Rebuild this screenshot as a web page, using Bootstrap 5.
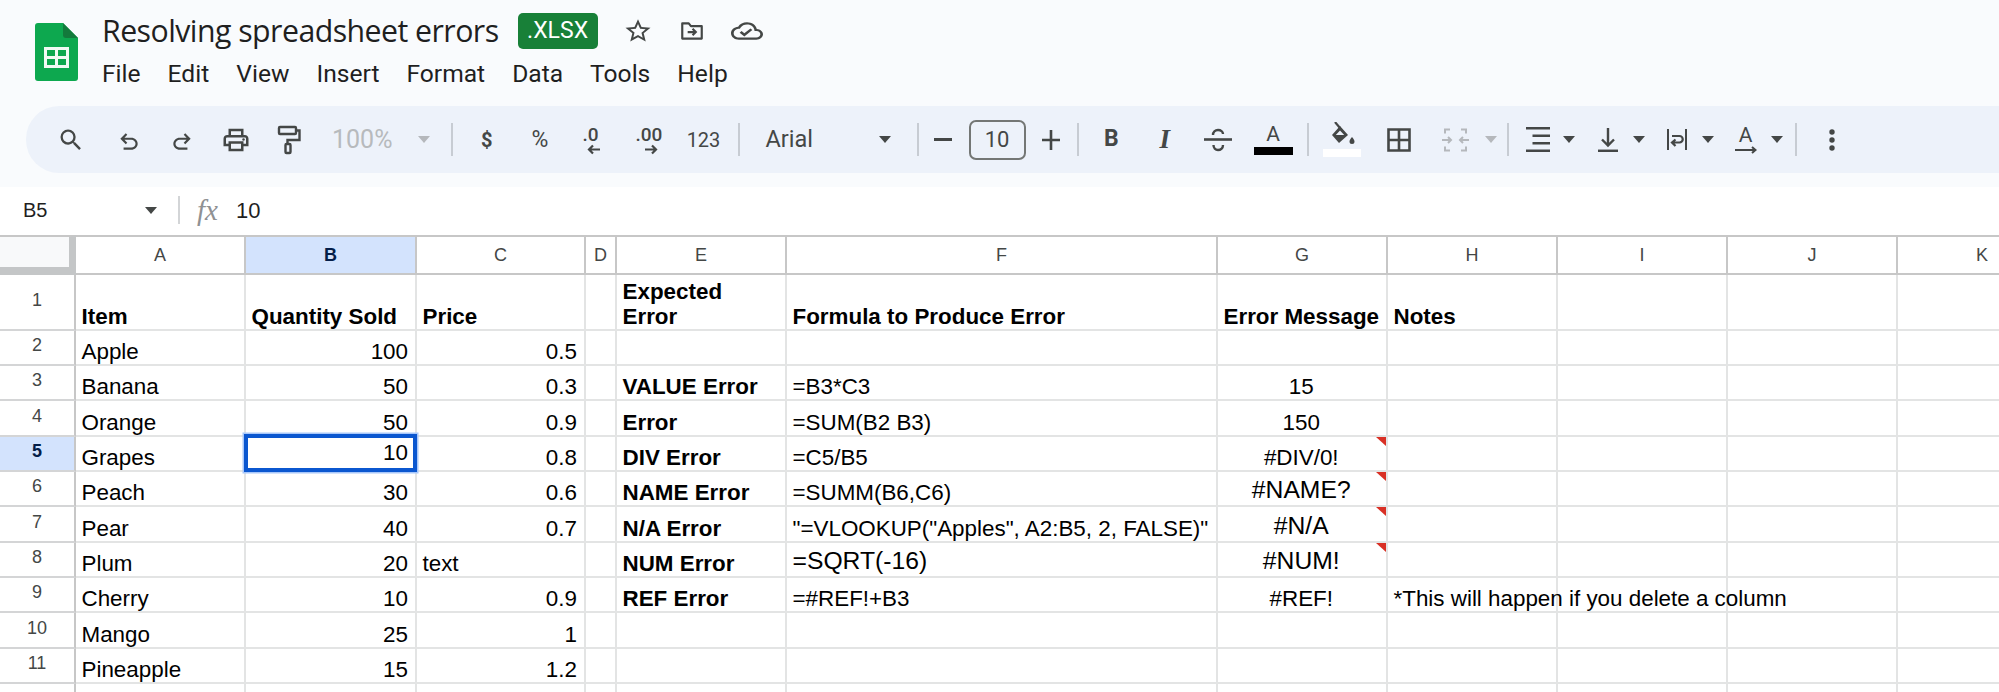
<!DOCTYPE html>
<html lang="en">
<head>
<meta charset="utf-8">
<title>Resolving spreadsheet errors</title>
<link href="https://cdn.jsdelivr.net/npm/bootstrap@5.3.0/dist/css/bootstrap.min.css" rel="stylesheet">
<style>
html,body{height:692px;overflow:hidden;background:#fff;}
body{font-family:Roboto,"Liberation Sans",sans-serif;color:#1f1f1f;}
.top-wrap{background:#f9fbfd;height:187px;}
.head-area{height:106px;padding-left:35px;}
.logo-box{width:43px;margin-top:23px;flex:none;}
.head-text{margin-left:24px;padding-top:13px;}
.doc-title{font-size:30.3px;line-height:36px;color:#1f1f1f;font-family:"Open Sans",Roboto,sans-serif;letter-spacing:-.55px;}
.xlsx-tag{background:#188038;color:#fff;width:80px;height:36px;border-radius:5px;font-size:23px;line-height:36px;text-align:center;margin-left:19px;}
.tico{color:#444746;}
.star-ico{margin-left:25px;}
.move-ico{margin-left:25px;}
.cloud-ico{margin-left:25px;}
.menu-row{margin-top:7px;height:36px;font-size:24.6px;line-height:36px;gap:27px;color:#1f1f1f;}
.tool-strip{margin-left:26px;height:67px;background:#edf2fa;border-radius:33px 0 0 33px;padding-left:20px;color:#444746;}
.tb{width:53.5px;height:67px;flex:none;}
.tw44{width:44px}.tw18{width:18px}.tw37{width:37px}.tw40{width:40px}.tw56{width:56px}.tw61{width:61px}.tw52{width:52px}.tw50{width:50px}.tw53{width:53px}
.sp4{margin-left:4px;}.sp6{margin-left:6px;}.sp7{margin-left:7px;}.sp8{margin-left:8px;}
.sepbox{width:14px;height:67px;flex:none;}
.sepbox.wide{width:17px;}
.sepbox.mid{width:16px;}
.sepbox.late{width:20px;}
.sepbox i{display:block;width:2px;height:33px;background:#c7ccd3;}
.tcaret{width:0;height:0;border-left:6.5px solid transparent;border-right:6.5px solid transparent;border-top:7px solid #444746;}
.tcaret.off{border-top-color:#b5b8bc;}
.zoom-box{width:127px;height:67px;flex:none;color:#b7babd;font-size:25px;padding-left:16px;padding-right:13px;}
.font-box{width:165px;height:67px;flex:none;font-size:23.5px;padding-left:20px;padding-right:20px;}
.size-box{width:57px;height:40px;border:2px solid #747775;border-radius:7px;font-size:22px;margin:0 5px 0 7px;flex:none;color:#444746;}
.glyph-t{font-size:20px;line-height:1;}
.glyph-p{font-size:23px;line-height:1;}
.glyph-b{font-size:23px;font-weight:700;}
.glyph-i{font-family:"Liberation Serif",serif;font-style:italic;font-weight:700;font-size:27px;line-height:1;}
.dec-stack{line-height:1;font-size:19px;font-weight:500;}
.arrow-l{margin-left:20px;}
.arrow-r{margin-left:14px;}
.color-a{font-size:21px;line-height:21px;}
.color-bar{width:39px;height:8px;background:#000;margin-top:2px;}
.white-bar{width:38px;height:8px;background:#fff;margin-top:3px;}
.formula-row{height:48px;padding-bottom:2px;background:#fff;color:#1f1f1f;font-family:"Liberation Sans",Arial,sans-serif;}
.cell-name{width:178px;padding-left:23px;padding-right:21px;font-size:20px;flex:none;}
.form-sep{width:2px;height:28px;background:#d3d5d7;flex:none;}
.fx-mark{font-family:"Liberation Serif",serif;font-style:italic;font-size:29px;line-height:1;color:#8f9193;margin-left:17px;width:39px;}
.form-val{font-size:22px;}
.sheet-grid{border-collapse:separate;border-spacing:0;table-layout:fixed;width:2068px;font-family:"Liberation Sans",Arial,sans-serif;font-size:22.4px;color:#000;}
.sheet-grid td,.sheet-grid th{padding:0 7px 0 5.500px;border-right:2px solid #e3e4e4;border-bottom:2px solid #e3e4e4;vertical-align:bottom;line-height:25px;white-space:nowrap;overflow:visible;font-weight:400;}
.sheet-grid .colh th{height:40px;padding:0;text-align:center;vertical-align:middle;font-size:18px;color:#444746;border-top:2px solid #c7c7c7;border-right:2px solid #c7c7c7;border-bottom:2px solid #c7c7c7;}
.sheet-grid .colh th.corner{background:#f8f9fa;border-right:7px solid #c4c6c7;border-bottom:8px solid #c4c6c7;height:40px;}
.sheet-grid .colh th.picked,.sheet-grid .rowh.picked{background:#d3e3fd;color:#041e49;font-weight:700;}
.sheet-grid .rowh{padding:0 0 4px;text-align:center;vertical-align:middle;font-size:18px;color:#444746;border-right:2px solid #c7c7c7;border-bottom:2px solid #d4d5d6;}
.r1{height:56px}.r35{height:35px}.r36{height:36px}
.sheet-grid .bb{font-weight:700;}
.sheet-grid .rr{text-align:right;}
.sheet-grid .cc{text-align:center;}
.sheet-grid .big{font-size:24.7px;padding-bottom:3px;}
.note-cell{position:relative;}
.note-cell::after{content:"";position:absolute;top:0;right:0;border-top:9px solid #d93025;border-left:10px solid transparent;}
.sel-cell{position:relative;}
.sheet-grid .sel-cell{padding-bottom:5px;}
.sel-cell::after{content:"";position:absolute;top:-3px;left:-2px;right:-2px;bottom:-2px;border:4px solid #0b57d0;box-shadow:0 0 0 1.500px #a8c7fa;}
.sheet-wrap{overflow:hidden;height:457px;}
</style>
</head>
<body>
<div class="top-wrap">
  <div class="head-area d-flex">
    <div class="logo-box">
      <svg width="43" height="58" viewBox="0 0 43 58"><path d="M3 0h25l15 15v40a3 3 0 0 1-3 3H3a3 3 0 0 1-3-3V3a3 3 0 0 1 3-3z" fill="#0da84f"/><path d="M28 0v12a3 3 0 0 0 3 3h12z" fill="#137a3c"/><path d="M9 24h25v21H9z M12 27v6h8v-6z M23 27v6h8v-6z M12 36v6h8v-6z M23 36v6h8v-6z" fill="#f1faf4" fill-rule="evenodd"/></svg>
    </div>
    <div class="head-text">
      <div class="d-flex align-items-center">
        <span class="doc-title">Resolving spreadsheet errors</span>
        <span class="xlsx-tag">.XLSX</span>
        <svg class="tico star-ico" width="30" height="28" viewBox="0 0 24 24" preserveAspectRatio="none" fill="currentColor"><path d="M22 9.24l-7.19-.62L12 2 9.19 8.63 2 9.24l5.46 4.73L5.82 21 12 17.27 18.18 21l-1.63-7.03L22 9.24zM12 15.4l-3.76 2.27 1-4.28-3.32-2.88 4.38-.38L12 6.1l1.71 4.04 4.38.38-3.32 2.88 1 4.28L12 15.4z"/></svg>
        <svg class="tico move-ico" width="28" height="26" viewBox="0 0 24 24" fill="none" stroke="currentColor" stroke-width="2"><path d="M3 19V5h6l2 2.5h10V19z" stroke-linejoin="round"/><path d="M8 13h7M12.5 10l3 3-3 3" /></svg>
        <svg class="tico cloud-ico" width="32" height="26" viewBox="0 0 24 24" preserveAspectRatio="none" fill="currentColor"><path d="M19.35 10.04C18.67 6.59 15.64 4 12 4 9.11 4 6.6 5.64 5.35 8.04 2.34 8.36 0 10.91 0 14c0 3.31 2.69 6 6 6h13c2.76 0 5-2.24 5-5 0-2.64-2.05-4.78-4.65-4.96zM19 18H6c-2.21 0-4-1.79-4-4 0-2.05 1.53-3.76 3.56-3.97l1.07-.11.5-.95C8.08 7.14 9.94 6 12 6c2.62 0 4.88 1.86 5.39 4.43l.3 1.5 1.53.11c1.56.1 2.78 1.41 2.78 2.96 0 1.65-1.35 3-3 3zm-9-3.82l-2.09-2.09L6.5 13.5 10 17l6.01-6.01-1.41-1.41z"/></svg>
      </div>
      <div class="menu-row d-flex"><span>File</span><span>Edit</span><span>View</span><span>Insert</span><span>Format</span><span>Data</span><span>Tools</span><span>Help</span></div>
    </div>
  </div>

  <div class="tool-strip d-flex align-items-center">
    <div class="tb tw50 d-flex align-items-center justify-content-center"><svg width="28" height="28" viewBox="0 0 24 24" fill="currentColor"><path d="M15.5 14h-.79l-.28-.27A6.471 6.471 0 0 0 16 9.5 6.5 6.5 0 1 0 9.5 16c1.61 0 3.09-.59 4.23-1.57l.27.28v.79l5 4.99L20.49 19l-4.99-5zm-6 0C7.01 14 5 11.99 5 9.5S7.01 5 9.5 5 14 7.01 14 9.5 11.99 14 9.5 14z"/></svg></div>
    <div class="tb sp6 d-flex align-items-center justify-content-center"><svg width="26" height="26" viewBox="0 0 24 24" fill="currentColor"><path d="M7 21v-2h7.1c1.05 0 1.96-.33 2.74-1S18 16.48 18 15.45s-.39-1.92-1.16-2.6-1.69-1-2.74-1H7.8l2.6 2.6L9 15.85l-5-5 5-5 1.4 1.4-2.6 2.6h6.3c1.62 0 3 .53 4.16 1.58S20 13.88 20 15.45s-.58 2.87-1.74 3.92S15.72 21 14.1 21H7z"/></svg></div>
    <div class="tb d-flex align-items-center justify-content-center"><svg width="26" height="26" viewBox="0 0 24 24" fill="currentColor"><path transform="matrix(-1 0 0 1 24 0)" d="M7 21v-2h7.1c1.05 0 1.96-.33 2.74-1S18 16.48 18 15.45s-.39-1.92-1.16-2.6-1.69-1-2.74-1H7.8l2.6 2.6L9 15.85l-5-5 5-5 1.4 1.4-2.6 2.6h6.3c1.62 0 3 .53 4.16 1.58S20 13.88 20 15.45s-.58 2.87-1.74 3.92S15.72 21 14.1 21H7z"/></svg></div>
    <div class="tb d-flex align-items-center justify-content-center"><svg width="30" height="30" viewBox="0 0 24 24" fill="currentColor"><path d="M19 8h-1V3H6v5H5c-1.66 0-3 1.34-3 3v6h4v4h12v-4h4v-6c0-1.66-1.34-3-3-3zM8 5h8v3H8V5zm8 14H8v-4h8v4zm2-4v-2H6v2H4v-4c0-.55.45-1 1-1h14c.55 0 1 .45 1 1v4h-2z"/><circle cx="18" cy="11.5" r="1"/></svg></div>
    <div class="tb d-flex align-items-center justify-content-center"><svg width="24" height="30" viewBox="0 0 24 30" fill="none" stroke="currentColor" stroke-width="2.4"><rect x="2" y="2" width="17" height="7" rx="1"/><path d="M19 5.5h3.5V15H10.5v3"/><rect x="8.5" y="19" width="5" height="9" rx="1"/></svg></div>
    <div class="zoom-box d-flex align-items-center justify-content-between"><span>100%</span><span class="tcaret off"></span></div>
    <div class="sepbox wide d-flex align-items-center justify-content-center"><i></i></div>
    <div class="tb d-flex align-items-center justify-content-center glyph-t"><b>$</b></div>
    <div class="tb tw53 d-flex align-items-center justify-content-center glyph-p">%</div>
    <div class="tb tw53 d-flex flex-column align-items-start justify-content-center dec-stack sp-dec"><span class="ms-3">.0</span><svg class="arrow-l" width="14" height="11" viewBox="0 0 14 11" fill="none" stroke="currentColor" stroke-width="2.2"><path d="M13 5.5H2M6 1.5l-4 4 4 4"/></svg></div>
    <div class="tb tw56 d-flex flex-column align-items-start justify-content-center dec-stack"><span class="ms-3">.00</span><svg class="arrow-r ms-4" width="14" height="11" viewBox="0 0 14 11" fill="none" stroke="currentColor" stroke-width="2.2"><path d="M1 5.5h11M8 1.5l4 4-4 4"/></svg></div>
    <div class="tb tw56 d-flex align-items-center justify-content-center glyph-t" >123</div>
    <div class="sepbox d-flex align-items-center justify-content-center"><i></i></div>
    <div class="font-box d-flex align-items-center justify-content-between"><span>Arial</span><span class="tcaret"></span></div>
    <div class="sepbox d-flex align-items-center justify-content-center"><i></i></div>
    <div class="tb tw37 d-flex align-items-center justify-content-center"><svg width="18" height="3" viewBox="0 0 18 3" fill="currentColor"><rect width="18" height="3"/></svg></div>
    <div class="size-box d-flex align-items-center justify-content-center">10</div>
    <div class="tb tw40 d-flex align-items-center justify-content-center"><svg width="18" height="20" viewBox="0 0 18 20" fill="currentColor"><path d="M0 8.7h18v2.6H0zM7.7 0h2.6v20H7.7z"/></svg></div>
    <div class="sepbox d-flex align-items-center justify-content-center"><i></i></div>
    <div class="tb d-flex align-items-center justify-content-center glyph-b">B</div>
    <div class="tb d-flex align-items-center justify-content-center glyph-i">I</div>
    <div class="tb d-flex align-items-center justify-content-center"><svg width="28" height="24" viewBox="0 0 28 24" fill="none" stroke="currentColor" stroke-width="2.4"><path d="M0 11.5h28" stroke-width="2.6"/><path d="M9 7c0-3 2.2-5 5-5s5 1.600 5 4"/><path d="M9.500 17c0 3 2 5 4.500 5s5-1.600 5-5"/></svg></div>
    <div class="tb tw56 d-flex flex-column align-items-center justify-content-center"><span class="color-a">A</span><span class="color-bar"></span></div>
    <div class="sepbox d-flex align-items-center justify-content-center"><i></i></div>
    <div class="tb d-flex flex-column align-items-center justify-content-center"><svg width="26" height="24" viewBox="0 0 26 24" fill="currentColor"><path d="M3 13l8-9 8 9-9 8z M6.800 13h8.400L11 8.500z" fill-rule="evenodd"/><path d="M6 0l5 6" stroke="currentColor" stroke-width="2.200" fill="none"/><path d="M23 15c1.500 2 2.500 3 2.500 4.500a2.500 2.500 0 0 1-5 0c0-1.500 1-2.500 2.500-4.500z"/></svg><span class="white-bar"></span></div>
    <div class="tb tw61 d-flex align-items-center justify-content-center"><svg width="24" height="24" viewBox="0 0 24 24" fill="none" stroke="currentColor" stroke-width="2.600"><path d="M1.500 1.500h21v21h-21zM12 1.500v21M1.500 12h21"/></svg></div>
    <div class="tb tw52 d-flex align-items-center justify-content-center"><svg width="27" height="24" viewBox="0 0 27 24" fill="none" stroke="#b5b8bc" stroke-width="2"><path d="M8 1.500H3v4M19 1.500h5v4M8 22.500H3v-4M19 22.500h5v-4M0 12h9M6 9l3 3-3 3M27 12h-9M21 9l-3 3 3 3"/></svg></div>
    <div class="tb tw18 d-flex align-items-center justify-content-center"><span class="tcaret off"></span></div>
    <div class="sepbox mid d-flex align-items-center justify-content-center"><i></i></div>
    <div class="tb tw44 d-flex align-items-center justify-content-center"><svg width="24" height="25" viewBox="0 0 24 25" fill="currentColor"><path d="M0 0h24v2.500H0zM6.500 7.500H24V10H6.500zM6.500 15H24v2.500H6.500zM0 22.500h24V25H0z"/></svg></div>
    <div class="tb tw18 d-flex align-items-center justify-content-center"><span class="tcaret"></span></div>
    <div class="tb tw44 sp8 d-flex align-items-center justify-content-center"><svg width="20" height="24" viewBox="0 0 20 24" fill="none" stroke="currentColor" stroke-width="2.400"><path d="M10 0v17M4 11.500l6 6 6-6"/><path d="M0 22.800h20" stroke-width="2.500"/></svg></div>
    <div class="tb tw18 d-flex align-items-center justify-content-center"><span class="tcaret"></span></div>
    <div class="tb tw44 sp7 d-flex align-items-center justify-content-center"><svg width="20" height="21" viewBox="0 0 20 21" fill="none" stroke="currentColor" stroke-width="2"><path d="M1 0v21M19 0v21"/><path d="M5 7h7.500a3 3 0 0 1 0 6.500H6M8.500 10.500L5 13.500l3.500 3.500" stroke-width="2.200"/></svg></div>
    <div class="tb tw18 d-flex align-items-center justify-content-center"><span class="tcaret"></span></div>
    <div class="tb tw44 sp7 d-flex flex-column align-items-center justify-content-center"><span class="color-a">A</span><svg width="22" height="8" viewBox="0 0 22 8" fill="none" stroke="currentColor" stroke-width="2"><path d="M0 4h20M17 1l3.500 3-3.500 3"/></svg></div>
    <div class="tb tw18 d-flex align-items-center justify-content-center"><span class="tcaret"></span></div>
    <div class="sepbox late d-flex align-items-center justify-content-center"><i></i></div>
    <div class="tb tw44 sp4 d-flex align-items-center justify-content-center"><svg width="6" height="22" viewBox="0 0 6 22" fill="currentColor"><circle cx="3" cy="3" r="2.700"/><circle cx="3" cy="11" r="2.700"/><circle cx="3" cy="19" r="2.700"/></svg></div>
  </div>
</div>

<div class="formula-row d-flex align-items-center">
  <div class="cell-name d-flex align-items-center justify-content-between"><span>B5</span><span class="tcaret"></span></div>
  <div class="form-sep"></div>
  <div class="fx-mark">fx</div>
  <div class="form-val">10</div>
</div>

<div class="sheet-wrap">
<table class="sheet-grid">
  <colgroup><col width="76"><col width="170"><col width="171"><col width="169"><col width="31"><col width="170"><col width="431"><col width="170"><col width="170"><col width="170"><col width="170"><col width="170"></colgroup>
  <tr class="colh"><th class="corner"></th><th>A</th><th class="picked">B</th><th>C</th><th>D</th><th>E</th><th>F</th><th>G</th><th>H</th><th>I</th><th>J</th><th>K</th></tr>
  <tr class="r1"><td class="rowh">1</td><td class="bb">Item</td><td class="bb">Quantity Sold</td><td class="bb">Price</td><td></td><td class="bb">Expected<br>Error</td><td class="bb">Formula to Produce Error</td><td class="bb">Error Message</td><td class="bb">Notes</td><td></td><td></td><td></td></tr>
  <tr class="r35"><td class="rowh">2</td><td>Apple</td><td class="rr">100</td><td class="rr">0.5</td><td></td><td></td><td></td><td></td><td></td><td></td><td></td><td></td></tr>
  <tr class="r35"><td class="rowh">3</td><td>Banana</td><td class="rr">50</td><td class="rr">0.3</td><td></td><td class="bb">VALUE Error</td><td>=B3*C3</td><td class="cc">15</td><td></td><td></td><td></td><td></td></tr>
  <tr class="r36"><td class="rowh">4</td><td>Orange</td><td class="rr">50</td><td class="rr">0.9</td><td></td><td class="bb">Error</td><td>=SUM(B2 B3)</td><td class="cc">150</td><td></td><td></td><td></td><td></td></tr>
  <tr class="r35"><td class="rowh picked">5</td><td>Grapes</td><td class="rr sel-cell">10</td><td class="rr">0.8</td><td></td><td class="bb">DIV Error</td><td>=C5/B5</td><td class="cc note-cell">#DIV/0!</td><td></td><td></td><td></td><td></td></tr>
  <tr class="r35"><td class="rowh">6</td><td>Peach</td><td class="rr">30</td><td class="rr">0.6</td><td></td><td class="bb">NAME Error</td><td>=SUMM(B6,C6)</td><td class="cc note-cell big">#NAME?</td><td></td><td></td><td></td><td></td></tr>
  <tr class="r36"><td class="rowh">7</td><td>Pear</td><td class="rr">40</td><td class="rr">0.7</td><td></td><td class="bb">N/A Error</td><td>"=VLOOKUP("Apples", A2:B5, 2, FALSE)"</td><td class="cc note-cell big">#N/A</td><td></td><td></td><td></td><td></td></tr>
  <tr class="r35"><td class="rowh">8</td><td>Plum</td><td class="rr">20</td><td>text</td><td></td><td class="bb">NUM Error</td><td class="big">=SQRT(-16)</td><td class="cc note-cell big">#NUM!</td><td></td><td></td><td></td><td></td></tr>
  <tr class="r35"><td class="rowh">9</td><td>Cherry</td><td class="rr">10</td><td class="rr">0.9</td><td></td><td class="bb">REF Error</td><td>=#REF!+B3</td><td class="cc">#REF!</td><td>*This will happen if you delete a column</td><td></td><td></td><td></td></tr>
  <tr class="r36"><td class="rowh">10</td><td>Mango</td><td class="rr">25</td><td class="rr">1</td><td></td><td></td><td></td><td></td><td></td><td></td><td></td><td></td></tr>
  <tr class="r35"><td class="rowh">11</td><td>Pineapple</td><td class="rr">15</td><td class="rr">1.2</td><td></td><td></td><td></td><td></td><td></td><td></td><td></td><td></td></tr>
  <tr class="r35"><td class="rowh"></td><td></td><td></td><td></td><td></td><td></td><td></td><td></td><td></td><td></td><td></td><td></td></tr>
</table>
</div>
</body>
</html>
